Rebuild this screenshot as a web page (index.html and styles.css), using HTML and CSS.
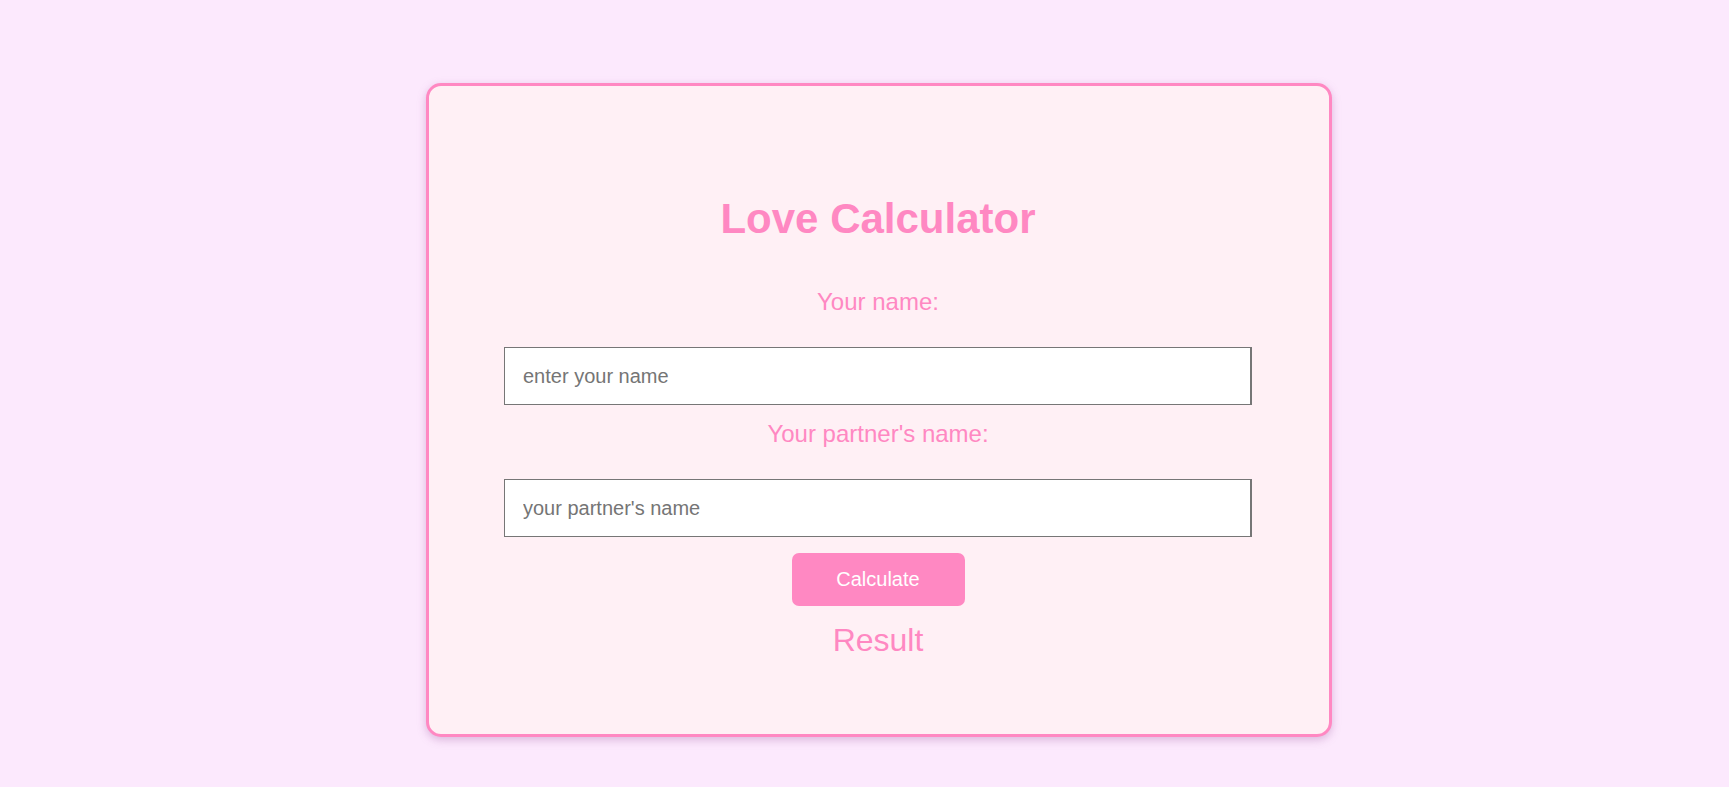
FILE: index.html
```html
<!DOCTYPE html>
<html lang="en">
<head>
<meta charset="utf-8">
<title>Love Calculator</title>
<link rel="stylesheet" href="styles.css">
</head>
<body>
<div class="page">
  <div class="card">
    <h1 class="title">Love Calculator</h1>
    <label class="label label-first" for="name1">Your name:</label>
    <input class="field" id="name1" type="text" placeholder="enter your name">
    <label class="label" for="name2">Your partner's name:</label>
    <input class="field" id="name2" type="text" placeholder="your partner's name">
    <button class="btn" type="button">Calculate</button>
    <div class="result">Result</div>
  </div>
</div>
</body>
</html>
```
FILE: styles.css
```css
html, body {
  margin: 0;
  padding: 0;
}
body {
  background: #fce9fd;
  font-family: "Liberation Sans", Arial, sans-serif;
  height: 787px;
  overflow: hidden;
}
.page {
  display: flex;
  justify-content: center;
  padding-left: 29px;
  padding-top: 83px;
}
.card {
  box-sizing: border-box;
  width: 906px;
  height: 654px;
  background: #fff0f5;
  border: 3px solid #ff88c2;
  border-radius: 15px;
  box-shadow: 0 3px 8px rgba(160, 90, 160, 0.35);
  padding: 109px 77px 0 75px;
  display: flex;
  flex-direction: column;
  align-items: center;
}
.title {
  margin: 0;
  font-size: 42px;
  font-weight: bold;
  color: #ff88c2;
  line-height: 47px;
}
.label {
  display: block;
  font-size: 24px;
  line-height: 27px;
  color: #ff88c2;
  margin: 15px 0 32px;
}
.label-first {
  margin-top: 46px;
}
.field {
  box-sizing: border-box;
  width: 100%;
  height: 58px;
  margin: 0;
  padding: 0 18px;
  font-family: "Liberation Sans", Arial, sans-serif;
  font-size: 20px;
  color: #333;
  background: #fff;
  border: 1px solid #767676;
  border-right-width: 2px;
  border-radius: 0;
  outline: none;
}
.field::placeholder {
  color: #757575;
}
.btn {
  margin-top: 16px;
  width: 173px;
  height: 53px;
  background: #ff88c2;
  color: #fff;
  border: none;
  border-radius: 7px;
  font-family: "Liberation Sans", Arial, sans-serif;
  font-size: 20px;
}
.result {
  margin-top: 16px;
  font-size: 32px;
  line-height: 36px;
  color: #ff88c2;
}
```
